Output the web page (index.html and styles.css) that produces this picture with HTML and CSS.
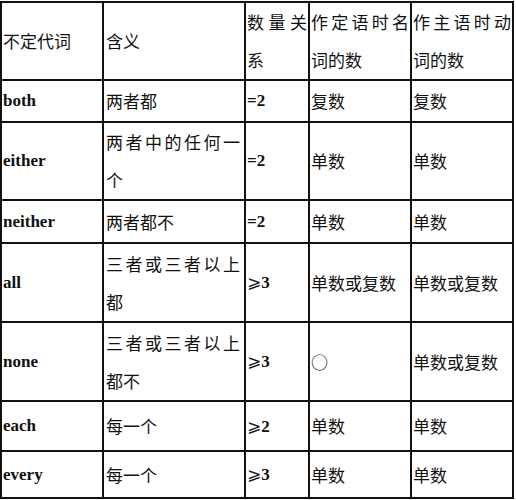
FILE: index.html
```html
<!DOCTYPE html>
<html lang="zh">
<head>
<meta charset="utf-8">
<title>不定代词</title>
<link rel="stylesheet" href="styles.css">
</head>
<body>
<table class="grid">
  <colgroup>
    <col class="c1"><col class="c2"><col class="c3"><col class="c4"><col class="c5">
  </colgroup>
  <tr class="r-head">
    <td class="zh">不定代词</td>
    <td class="zh">含义</td>
    <td class="zh">数量关系</td>
    <td class="zh">作定语时名词的数</td>
    <td class="zh">作主语时动词的数</td>
  </tr>
  <tr class="r-42">
    <td class="en">both</td>
    <td class="zh">两者都</td>
    <td class="en">=2</td>
    <td class="zh">复数</td>
    <td class="zh">复数</td>
  </tr>
  <tr class="r-78">
    <td class="en">either</td>
    <td class="zh">两者中的任何一个</td>
    <td class="en">=2</td>
    <td class="zh">单数</td>
    <td class="zh">单数</td>
  </tr>
  <tr class="r-43">
    <td class="en">neither</td>
    <td class="zh">两者都不</td>
    <td class="en">=2</td>
    <td class="zh">单数</td>
    <td class="zh">单数</td>
  </tr>
  <tr class="r-79">
    <td class="en">all</td>
    <td class="zh">三者或三者以上都</td>
    <td class="en"><span class="ge">⩾</span>3</td>
    <td class="zh">单数或复数</td>
    <td class="zh">单数或复数</td>
  </tr>
  <tr class="r-79">
    <td class="en">none</td>
    <td class="zh">三者或三者以上都不</td>
    <td class="en"><span class="ge">⩾</span>3</td>
    <td class="zh">○</td>
    <td class="zh">单数或复数</td>
  </tr>
  <tr class="r-50">
    <td class="en">each</td>
    <td class="zh">每一个</td>
    <td class="en"><span class="ge">⩾</span>2</td>
    <td class="zh">单数</td>
    <td class="zh">单数</td>
  </tr>
  <tr class="r-47">
    <td class="en">every</td>
    <td class="zh">每一个</td>
    <td class="en"><span class="ge">⩾</span>3</td>
    <td class="zh">单数</td>
    <td class="zh">单数</td>
  </tr>
</table>
</body>
</html>
```
FILE: styles.css
```css
html, body {
  margin: 0;
  padding: 0;
  background: #ffffff;
}

body {
  padding-top: 1px;
  font-family: "Liberation Serif", "Noto Sans CJK SC", serif;
  color: #111111;
}

.grid {
  border-collapse: collapse;
  table-layout: fixed;
  width: 514px;
}

.c1 { width: 102px; }
.c2 { width: 142px; }
.c3 { width: 64px; }
.c4 { width: 102px; }
.c5 { width: 102px; }

.grid td {
  border: 2px solid #111111;
  padding: 0 1px 0 1px;
  vertical-align: middle;
  line-height: 38px;
  overflow: hidden;
}

.grid td:nth-child(2) {
  padding: 0 4px 0 2px;
}

.zh {
  font-family: "Noto Sans CJK SC", sans-serif;
  font-size: 17px;
  font-weight: 400;
  text-align: justify;
}

.en {
  font-family: "Liberation Serif", "Noto Sans CJK SC", serif;
  font-size: 17px;
  font-weight: 700;
  text-align: left;
}

.ge {
  font-family: "DejaVu Sans", "Noto Sans CJK SC", sans-serif;
  font-weight: 400;
  font-size: 17px;
}

.r-head { height: 77px; }
.r-42 { height: 42px; }
.r-78 { height: 78px; }
.r-43 { height: 43px; }
.r-79 { height: 79px; }
.r-50 { height: 50px; }
.r-47 { height: 47px; }
```
